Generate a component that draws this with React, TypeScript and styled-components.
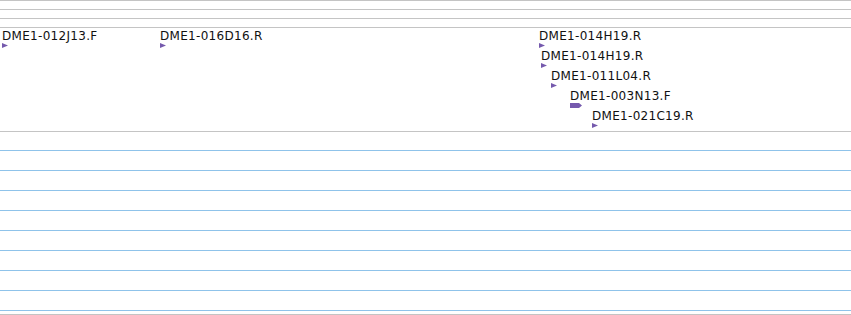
import React from "react";
import styled, { createGlobalStyle } from "styled-components";

type Feature = {
  name: string;
  left: number;
  row: number;
  length?: number;
};

const FEATURES: Feature[] = [
  { name: "DME1-012J13.F", left: 2, row: 0 },
  { name: "DME1-016D16.R", left: 160, row: 0 },
  { name: "DME1-014H19.R", left: 539, row: 0 },
  { name: "DME1-014H19.R", left: 541, row: 1 },
  { name: "DME1-011L04.R", left: 551, row: 2 },
  { name: "DME1-003N13.F", left: 570, row: 3, length: 12 },
  { name: "DME1-021C19.R", left: 592, row: 4 },
];

const GRID_ROWS = 8;

const GlobalStyle = createGlobalStyle`
  html, body {
    margin: 0;
    padding: 0;
    background: #fff;
  }
  body {
    font-family: "DejaVu Sans", "Liberation Sans", sans-serif;
  }
`;

const Browser = styled.div`
  width: 851px;
  height: 315px;
  overflow: hidden;
  background: #fff;
  border-top: 1px solid #c4c4c4;
  box-sizing: border-box;
`;

const Strip = styled.div`
  height: 8px;
  border-bottom: 1px solid #c4c4c4;
`;

const FeatureTrack = styled.div`
  position: relative;
  height: 103px;
  border-bottom: 1px solid #c4c4c4;
`;

const FeatureItem = styled.div`
  position: absolute;
  display: flex;
  flex-direction: column;
  align-items: flex-start;
`;

const Label = styled.span`
  font-size: 12px;
  line-height: 14px;
  color: #111;
  white-space: nowrap;
  letter-spacing: 0.3px;
`;

const Marker = styled.svg`
  display: block;
  fill: #7559ad;
`;

const GridArea = styled.div`
  padding-top: 18px;
  height: 164px;
  border-bottom: 1px solid #c4c4c4;
  display: flex;
  flex-direction: column;
`;

const GridLine = styled.div<{ $first?: boolean }>`
  height: ${(p) => (p.$first ? 0 : 19)}px;
  border-bottom: 1px solid #8fc3ea;
  flex-shrink: 0;
`;

const FeatureGlyph = ({ length }: { length?: number }) => {
  if (length) {
    return (
      <Marker width={length} height={5} viewBox={`0 0 ${length} 5`}>
        <path d={`M0 0 H${length - 3} L${length} 2.5 L${length - 3} 5 H0 Z`} />
      </Marker>
    );
  }
  return (
    <Marker width={6} height={5} viewBox="0 0 6 5">
      <polygon points="0,0 6,2.5 0,5" />
    </Marker>
  );
};

export default function App() {
  return (
    <>
      <GlobalStyle />
      <Browser>
        <Strip />
        <Strip />
        <Strip />
        <FeatureTrack>
          {FEATURES.map((f, i) => (
            <FeatureItem key={i} style={{ left: f.left, top: 1 + f.row * 20 }}>
              <Label>{f.name}</Label>
              <FeatureGlyph length={f.length} />
            </FeatureItem>
          ))}
        </FeatureTrack>
        <GridArea>
          {Array.from({ length: GRID_ROWS + 1 }).map((_, i) => (
            <GridLine key={i} $first={i === 0} />
          ))}
        </GridArea>
      </Browser>
    </>
  );
}
